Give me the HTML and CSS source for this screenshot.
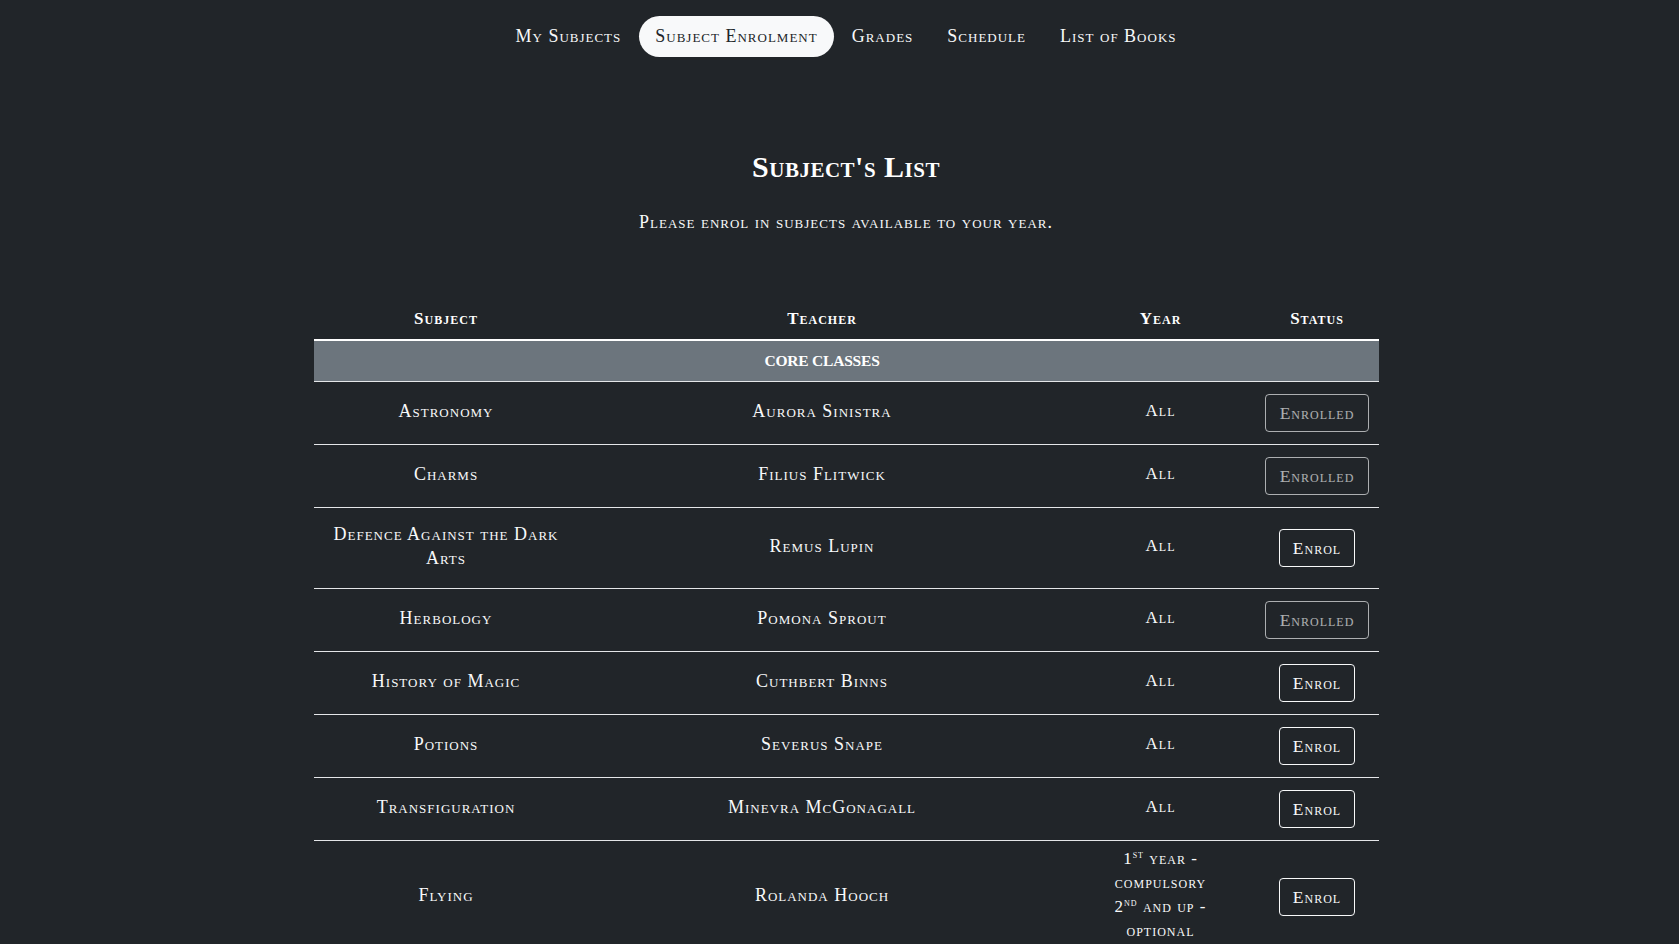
FILE: index.html
```html
<!DOCTYPE html>
<html lang="en">
<head>
<meta charset="utf-8">
<title>Subject Enrolment</title>
<link rel="stylesheet" href="styles.css">
</head>
<body>
<div class="page">
  <nav class="nav">
    <a class="nav-link" href="#">My Subjects</a>
    <a class="nav-link active" href="#">Subject Enrolment</a>
    <a class="nav-link" href="#">Grades</a>
    <a class="nav-link" href="#">Schedule</a>
    <a class="nav-link" href="#">List of Books</a>
  </nav>

  <main class="main">
    <h2 class="title">Subject's List</h2>
    <p class="lead">Please enrol in subjects available to your year.</p>

    <table class="subjects">
      <colgroup>
        <col class="c-subject">
        <col class="c-teacher">
        <col class="c-year">
        <col class="c-status">
      </colgroup>
      <thead>
        <tr>
          <th>Subject</th>
          <th>Teacher</th>
          <th>Year</th>
          <th>Status</th>
        </tr>
      </thead>
      <tbody>
        <tr class="group">
          <td></td>
          <td>CORE CLASSES</td>
          <td></td>
          <td></td>
        </tr>
        <tr>
          <td>Astronomy</td>
          <td>Aurora Sinistra</td>
          <td class="year">All</td>
          <td class="status"><button class="btn disabled">Enrolled</button></td>
        </tr>
        <tr>
          <td>Charms</td>
          <td>Filius Flitwick</td>
          <td class="year">All</td>
          <td class="status"><button class="btn disabled">Enrolled</button></td>
        </tr>
        <tr>
          <td>Defence Against the Dark Arts</td>
          <td>Remus Lupin</td>
          <td class="year">All</td>
          <td class="status"><button class="btn">Enrol</button></td>
        </tr>
        <tr>
          <td>Herbology</td>
          <td>Pomona Sprout</td>
          <td class="year">All</td>
          <td class="status"><button class="btn disabled">Enrolled</button></td>
        </tr>
        <tr>
          <td>History of Magic</td>
          <td>Cuthbert Binns</td>
          <td class="year">All</td>
          <td class="status"><button class="btn">Enrol</button></td>
        </tr>
        <tr>
          <td>Potions</td>
          <td>Severus Snape</td>
          <td class="year">All</td>
          <td class="status"><button class="btn">Enrol</button></td>
        </tr>
        <tr>
          <td>Transfiguration</td>
          <td>Minevra McGonagall</td>
          <td class="year">All</td>
          <td class="status"><button class="btn">Enrol</button></td>
        </tr>
        <tr>
          <td>Flying</td>
          <td>Rolanda Hooch</td>
          <td class="year">1<sup>st</sup> year -<br>compulsory<br>2<sup>nd</sup> and up -<br>optional</td>
          <td class="status"><button class="btn">Enrol</button></td>
        </tr>
      </tbody>
    </table>
  </main>
</div>
</body>
</html>
```

FILE: styles.css
```css
html, body {
  margin: 0;
  background: #212529;
}

body {
  color: #f8f9fa;
  font-family: "Liberation Serif", "Times New Roman", serif;
  font-size: 17px;
  line-height: 1.5;
  font-variant: small-caps;
  letter-spacing: 1px;
}

.page {
  padding-left: 13px;
  padding-bottom: 40px;
}

.nav {
  display: flex;
  justify-content: center;
  gap: 2px;
  padding-top: 16px;
}

.nav-link {
  display: block;
  padding: 7px 16px;
  font-size: 18px;
  line-height: 27px;
  color: #f8f9fa;
  text-decoration: none;
  border-radius: 21px;
}

.nav-link.active {
  background: #f8f9fa;
  color: #212529;
}

.main {
  display: flex;
  flex-direction: column;
  align-items: center;
}

.title {
  margin: 92px 0 0;
  font-size: 30px;
  line-height: 36px;
  font-weight: bold;
  letter-spacing: 0.5px;
  color: #fff;
}

.lead {
  margin: 25px 0 0;
  font-size: 18px;
  line-height: 25px;
  letter-spacing: 1px;
}

.subjects {
  margin-top: 64px;
  width: 1065px;
  border-collapse: collapse;
  line-height: 24px;
  text-align: center;
}

.c-subject { width: 265px; }
.c-teacher { width: 487px; }
.c-year { width: 190px; }
.c-status { width: 123px; }

.subjects th {
  padding: 8px;
  font-weight: bold;
  color: #fff;
  border-bottom: 2px solid #fff;
}

.subjects td {
  padding: 14px 8px 18px;
  vertical-align: middle;
  font-size: 18px;
  border-bottom: 1px solid #e4e6e8;
}

.subjects td.year {
  padding: 6px 8px 10px;
  font-size: 17px;
}

.subjects td.status {
  padding: 8px;
}

.subjects tr.group td {
  padding: 8px;
  background: #6c757d;
  font-weight: bold;
  font-size: 15.5px;
  line-height: 24px;
  letter-spacing: -0.2px;
  color: #fff;
}

.year sup {
  font-size: 11px;
  line-height: 0;
  vertical-align: 6px;
}

.btn {
  display: inline-block;
  height: 38px;
  margin: 4px 0;
  padding: 0 13px;
  background: transparent;
  border: 1px solid #f8f9fa;
  border-radius: 4px;
  color: #f8f9fa;
  font-family: inherit;
  font-size: 17.5px;
  font-variant: small-caps;
  letter-spacing: 1px;
  line-height: 36px;
  cursor: pointer;
}

.btn.disabled {
  opacity: 0.65;
  padding: 0 14px;
}
```
